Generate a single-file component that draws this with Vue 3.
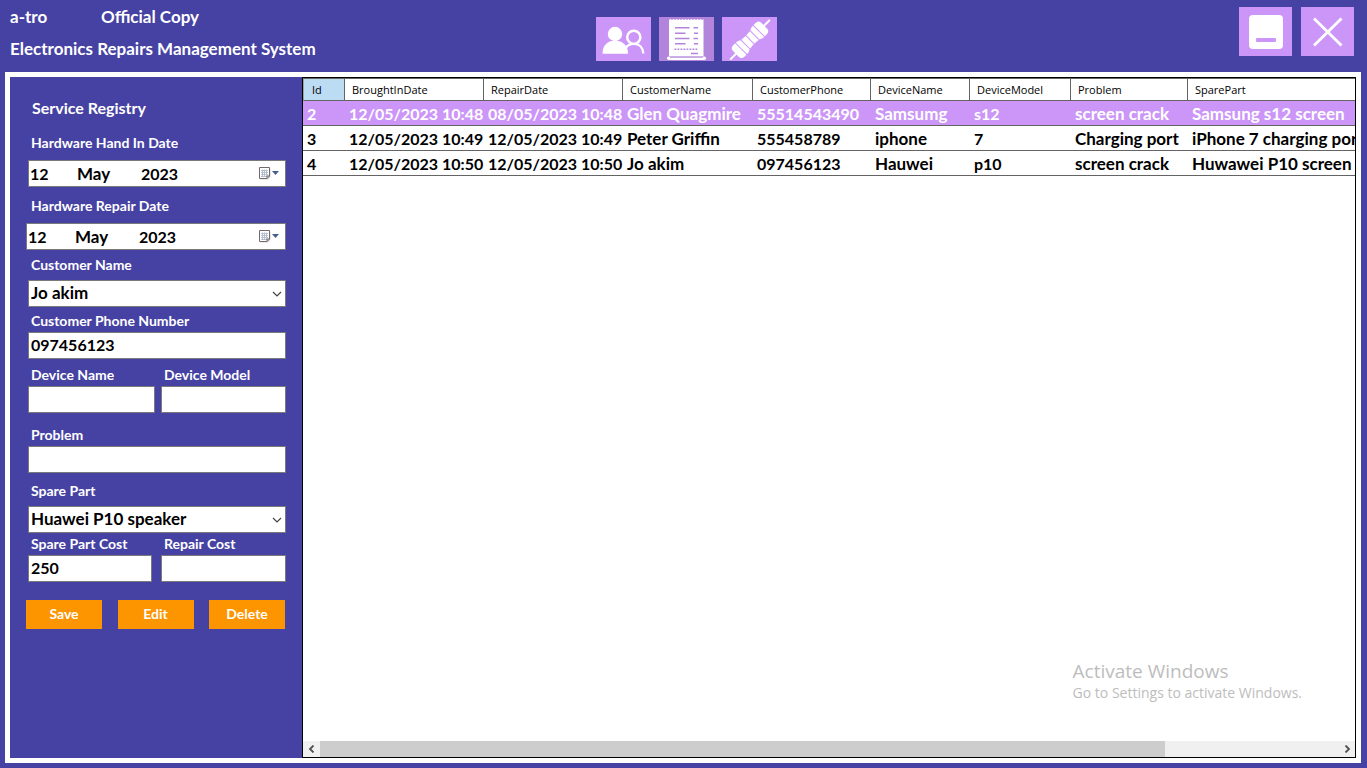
<script setup>
import { ref } from 'vue'

const columns = [
  { key: 'id', label: 'Id', size: 'c-id' },
  { key: 'broughtIn', label: 'BroughtInDate', size: 'c-date' },
  { key: 'repair', label: 'RepairDate', size: 'c-date' },
  { key: 'customer', label: 'CustomerName', size: 'c-customer', words: true },
  { key: 'phone', label: 'CustomerPhone', size: 'c-phone' },
  { key: 'device', label: 'DeviceName', size: 'c-device', words: true },
  { key: 'model', label: 'DeviceModel', size: 'c-model' },
  { key: 'problem', label: 'Problem', size: 'c-problem', words: true },
  { key: 'part', label: 'SparePart', size: 'c-part', words: true },
]

const rows = [
  { id: 2, broughtIn: '12/05/2023 10:48', repair: '08/05/2023 10:48', customer: 'Glen Quagmire', phone: '55514543490', device: 'Samsumg', model: 's12', problem: 'screen crack', part: 'Samsung s12 screen' },
  { id: 3, broughtIn: '12/05/2023 10:49', repair: '12/05/2023 10:49', customer: 'Peter Griffin', phone: '555458789', device: 'iphone', model: '7', problem: 'Charging port', part: 'iPhone 7 charging port' },
  { id: 4, broughtIn: '12/05/2023 10:50', repair: '12/05/2023 10:50', customer: 'Jo akim', phone: '097456123', device: 'Hauwei', model: 'p10', problem: 'screen crack', part: 'Huwawei P10 screen' },
]

const selected = ref(2)
const dates = ref([
  { id: 'hand-in', label: 'Hardware Hand In Date', day: '12', month: 'May', year: '2023' },
  { id: 'repair-date', label: 'Hardware Repair Date', day: '12', month: 'May', year: '2023' },
])
const customer = ref('Jo akim')
const phone = ref('097456123')
const deviceName = ref('')
const deviceModel = ref('')
const problem = ref('')
const sparePart = ref('Huawei P10 speaker')
const partCost = ref('250')
const repairCost = ref('')
</script>

<template>
  <div class="app">
    <header class="top">
      <div class="titles">
        <div class="brand"><span class="name">a-tro</span><span>Official Copy</span></div>
        <div class="system">Electronics Repairs Management System</div>
      </div>
      <nav class="nav">
        <button class="tile" aria-label="Customers">
          <svg viewBox="0 0 55 44">
            <circle cx="37.800" cy="20.300" r="6.600" fill="none" stroke="#fff" stroke-width="2.400" />
            <path d="M30 30.500C32 28 34.500 26.900 37.800 26.900C43.500 26.900 47 31 47.300 36.500" fill="none" stroke="#fff" stroke-width="2.400" />
            <circle cx="19" cy="17" r="7.200" fill="#fff" />
            <path d="M6.500 36.700C6.500 28.500 11 23.800 19 23.800S32 28.500 32 36.700Z" fill="#fff" />
          </svg>
        </button>
        <button class="tile current" aria-label="Services">
          <svg viewBox="0 0 55 44">
            <path d="M10 3L11.500 2L13 3L14.500 2L16 3L17.500 2L19 3L20.500 2L22 3L23.500 2L25 3L26.500 2L28 3L29.500 2L31 3L32.500 2L34 3L35.500 2L37 3L38.500 2L40 3L41.500 2L43 3L44.500 2V39H10Z" fill="#fff" />
            <rect x="8" y="39.500" width="39" height="3.500" rx="1.700" fill="#fff" />
            <path d="M11 40.200H44" stroke="#b384dc" stroke-width="1" />
            <path d="M16 10.800H30.500M34.500 10.800H39M16 16.200H26.500M35 16.200H39M16 21.500H30.500M34.500 21.500H39M16 26.800H26.500M35 26.800H39M32 36.500H39" stroke="#b384dc" stroke-width="1.600" />
            <path d="M15.500 32.300H39" stroke="#b384dc" stroke-width="1.600" stroke-dasharray="1.800 1.200" />
          </svg>
        </button>
        <button class="tile" aria-label="Spare parts">
          <svg viewBox="0 0 55 44">
            <g transform="translate(28 22.800) rotate(-45)" fill="#fff">
              <rect x="-28" y="-1" width="10" height="2" />
              <rect x="18" y="-1" width="10" height="2" />
              <path d="M-13 -8H-15.500Q-20 -8 -20 -4V4Q-20 8 -15.500 8H-13Z" />
              <path d="M-12 -8Q-9 -8 -7 -6.500V6.500Q-9 8 -12 8Z" />
              <path d="M-6 -6.200L-0.500 -5.800V5.800L-6 6.200Z" />
              <path d="M0.500 -5.800L6 -6.200V6.200L0.500 5.800Z" />
              <path d="M7 -6.500Q9 -8 12 -8V8Q9 8 7 6.500Z" />
              <path d="M13 -8H15.500Q20 -8 20 -4V4Q20 8 15.500 8H13Z" />
            </g>
          </svg>
        </button>
      </nav>
      <div class="window">
        <button class="tile" aria-label="Minimize">
          <svg viewBox="0 0 53 49">
            <rect x="10" y="8" width="34" height="34" rx="4" fill="#fff" />
            <rect x="17" y="31" width="20" height="4" rx="1" fill="#cc96f8" />
          </svg>
        </button>
        <button class="tile" aria-label="Close">
          <svg viewBox="0 0 53 49">
            <path d="M13 11.500L40.500 38.500M40.500 11.500L13 38.500" stroke="#fff" stroke-width="2.800" />
          </svg>
        </button>
      </div>
    </header>

    <main class="frame">
      <form class="side" @submit.prevent>
        <h1>Service Registry</h1>

        <div v-for="d in dates" :key="d.id" class="field" :class="d.id">
          <label :for="d.id">{{ d.label }}</label>
          <div class="box date">
            <input :id="d.id" v-model="d.day" class="day" />
            <input v-model="d.month" class="month" aria-label="Month" />
            <input v-model="d.year" class="year" aria-label="Year" />
            <button type="button" class="pick" aria-label="Open calendar">
              <svg viewBox="0 0 22 14">
                <path d="M2.500 1.500H12.500V10L10 12.500H2.500Z" fill="#b8b4b4" opacity="0.500" />
                <path d="M1.500 0.500H11.500V9L9 11.500H1.500Z" fill="#fff" stroke="#73696b" />
                <path d="M3 3.500H10M3 5.500H10M3 7.500H10M3 9.500H9M4.500 2.500V10M6.500 2.500V10M8.500 2.500V10" stroke="#b4c0d0" stroke-width="1" />
                <path d="M11.500 9H9V11.500" fill="none" stroke="#73696b" />
                <path d="M14 4H21L17.500 8Z" fill="#465f8c" />
              </svg>
            </button>
          </div>
        </div>

        <div class="field g-name">
          <label for="customer">Customer Name</label>
          <div class="combo">
            <select id="customer" v-model="customer" class="box"><option>Jo akim</option></select>
            <svg class="chevron" viewBox="0 0 10 6"><path d="M1 1L5 5L9 1" fill="none" stroke="#444" stroke-width="1.200" /></svg>
          </div>
        </div>

        <div class="field tight g-phone">
          <label for="phone">Customer Phone Number</label>
          <input id="phone" v-model="phone" class="box" />
        </div>

        <div class="pair g-device">
          <div class="field tight">
            <label for="device-name">Device Name</label>
            <input id="device-name" v-model="deviceName" class="box" />
          </div>
          <div class="field tight">
            <label for="device-model">Device Model</label>
            <input id="device-model" v-model="deviceModel" class="box" />
          </div>
        </div>

        <div class="field tight g-problem">
          <label for="problem">Problem</label>
          <input id="problem" v-model="problem" class="box" />
        </div>

        <div class="field g-part">
          <label for="part">Spare Part</label>
          <div class="combo">
            <select id="part" v-model="sparePart" class="box"><option>Huawei P10 speaker</option></select>
            <svg class="chevron" viewBox="0 0 10 6"><path d="M1 1L5 5L9 1" fill="none" stroke="#444" stroke-width="1.200" /></svg>
          </div>
        </div>

        <div class="pair cost">
          <div class="field tight">
            <label for="part-cost">Spare Part Cost</label>
            <input id="part-cost" v-model="partCost" class="box" />
          </div>
          <div class="field tight">
            <label for="repair-cost">Repair Cost</label>
            <input id="repair-cost" v-model="repairCost" class="box" />
          </div>
        </div>

        <div class="actions">
          <button>Save</button>
          <button>Edit</button>
          <button>Delete</button>
        </div>
      </form>

      <section class="grid">
        <div class="view">
          <table>
            <colgroup><col v-for="c in columns" :key="c.key" :class="c.size" /></colgroup>
            <thead>
              <tr><th v-for="c in columns" :key="c.key" scope="col">{{ c.label }}</th></tr>
            </thead>
            <tbody>
              <tr v-for="r in rows" :key="r.id" :class="{ on: r.id === selected }" @click="selected = r.id">
                <td v-for="c in columns" :key="c.key" :class="{ words: c.words }">{{ r[c.key] }}</td>
              </tr>
            </tbody>
          </table>
        </div>
        <div class="scroll">
          <button aria-label="Scroll left">
            <svg viewBox="0 0 8 8"><path d="M5.500 0.500L2 4L5.500 7.500" fill="none" stroke="#505050" stroke-width="1.800" /></svg>
          </button>
          <div class="track"><div class="thumb"></div></div>
          <button aria-label="Scroll right">
            <svg viewBox="0 0 8 8"><path d="M2.500 0.500L6 4L2.500 7.500" fill="none" stroke="#505050" stroke-width="1.800" /></svg>
          </button>
        </div>
      </section>
    </main>

    <aside class="watermark">
      <div class="w-title">Activate Windows</div>
      <div class="w-text">Go to Settings to activate Windows.</div>
    </aside>
  </div>
</template>

<style>
body {
  background: #4642a3;
}
</style>

<style scoped>
* {
  box-sizing: border-box;
}
.app {
  position: relative;
  display: flex;
  flex-direction: column;
  min-height: 100vh;
  padding: 0 6px 5px 5px;
  background: #4642a3;
  color: #fff;
  font: 700 16px/20px Lato, "Liberation Sans", sans-serif;
}
button,
input,
select {
  min-width: 0;
  margin: 0;
  padding: 0;
  border: 0;
  border-radius: 0;
  background: none;
  color: inherit;
  font: inherit;
}
svg {
  display: block;
}
.top {
  display: grid;
  grid-template-columns: 586fr auto 577fr;
  height: 72px;
  padding: 7px 7px 0 5px;
}
.titles {
  font-size: 17px;
  white-space: nowrap;
}
.brand {
  display: flex;
}
.name {
  width: 91px;
}
.system {
  margin-top: 12px;
}
.nav {
  display: flex;
  gap: 8px;
  padding-top: 10px;
}
.tile {
  background: #cc96f8;
}
.nav .tile {
  width: 55px;
  height: 44px;
}
.nav .current {
  background: #b384dc;
}
.window {
  display: flex;
  justify-content: flex-end;
  gap: 9px;
}
.window .tile {
  width: 53px;
  height: 49px;
}
.frame {
  flex: 1;
  display: flex;
  border: 5px solid #fff;
}
.side {
  flex: 0 0 292px;
  min-width: 0;
  padding: 21px 16px 20px 18px;
}
h1 {
  margin: 0 0 17px 4px;
  font: inherit;
}
.field {
  display: flex;
  flex-direction: column;
  gap: 7px;
  min-width: 0;
}
.field.tight {
  gap: 3px;
}
.field label {
  padding-left: 3px;
  font-size: 14px;
  line-height: 16px;
  white-space: nowrap;
}
.hand-in,
.repair-date {
  gap: 9px;
}
.repair-date {
  margin: 11px 0 0 -2px;
}
.repair-date label {
  padding-left: 5px;
}
.g-name {
  margin-top: 7px;
}
.g-phone {
  margin-top: 6px;
}
.g-device {
  margin-top: 8px;
}
.g-problem {
  margin-top: 14px;
}
.g-part {
  margin-top: 10px;
}
.cost {
  margin-top: 3px;
}
.box {
  width: 100%;
  height: 27px;
  padding: 0 2px 2px;
  border: 1px solid #7a7a7a;
  background: #fff;
  color: #000;
}
.date {
  display: flex;
  align-items: center;
  padding: 0 5px 0 1px;
}
.day {
  width: 47px;
}
.month {
  width: 64px;
  font-size: 17px;
}
.year {
  flex: 1;
}
.pick {
  width: 22px;
}
.combo {
  position: relative;
}
.combo select {
  display: block;
  appearance: none;
  font-size: 17px;
}
.chevron {
  position: absolute;
  top: 11px;
  right: 4px;
  width: 10px;
  height: 6px;
  pointer-events: none;
}
.pair {
  display: grid;
  grid-template-columns: 127fr 125fr;
  gap: 6px;
}
.cost {
  grid-template-columns: 124fr 125fr;
  gap: 9px;
}
.actions {
  display: flex;
  justify-content: space-between;
  margin: 18px 1px 0 -2px;
}
.actions button {
  width: 76px;
  height: 29px;
  padding-bottom: 1px;
  background: #fd9500;
  font-size: 14px;
}
.grid {
  flex: 1;
  min-width: 0;
  display: flex;
  flex-direction: column;
  border: 1px solid #000;
  background: #fff;
  color: #000;
}
.view {
  flex: 1;
  overflow: hidden;
}
table {
  width: 1266px;
  table-layout: fixed;
  border-collapse: separate;
  border-spacing: 0;
}
.c-id {
  width: 42px;
}
.c-date {
  width: 139px;
}
.c-customer {
  width: 130px;
}
.c-phone {
  width: 118px;
}
.c-device {
  width: 99px;
}
.c-model {
  width: 101px;
}
.c-problem {
  width: 117px;
}
th {
  height: 23px;
  padding: 0 7px;
  border: solid #646464;
  border-width: 1px 1px 1px 0;
  font: 400 11px/20px "Open Sans", "Noto Sans", sans-serif;
  text-align: left;
}
th:first-child {
  padding-left: 8px;
  border-left: 1px solid #a0a0a0;
  background: #bcdcf4;
}
td {
  height: 25px;
  padding: 2px 0 0 4px;
  border-bottom: 1px solid #646464;
  white-space: nowrap;
}
.words {
  font-size: 17px;
}
.on td {
  background: #cc96f8;
  color: #fff;
}
.scroll {
  display: flex;
  height: 16px;
  background: #f0f0f0;
}
.scroll button {
  display: grid;
  place-items: center;
  width: 17px;
}
.scroll svg {
  width: 8px;
  height: 8px;
}
.track {
  flex: 1;
}
.thumb {
  width: 83%;
  height: 100%;
  background: #cdcdcd;
}
.watermark {
  position: absolute;
  right: 65px;
  bottom: 65px;
  color: #bdbdbd;
  font: 400 14px/20px "Open Sans", "Noto Sans", sans-serif;
  pointer-events: none;
}
.w-title {
  font-size: 19px;
  line-height: 24px;
}
</style>
